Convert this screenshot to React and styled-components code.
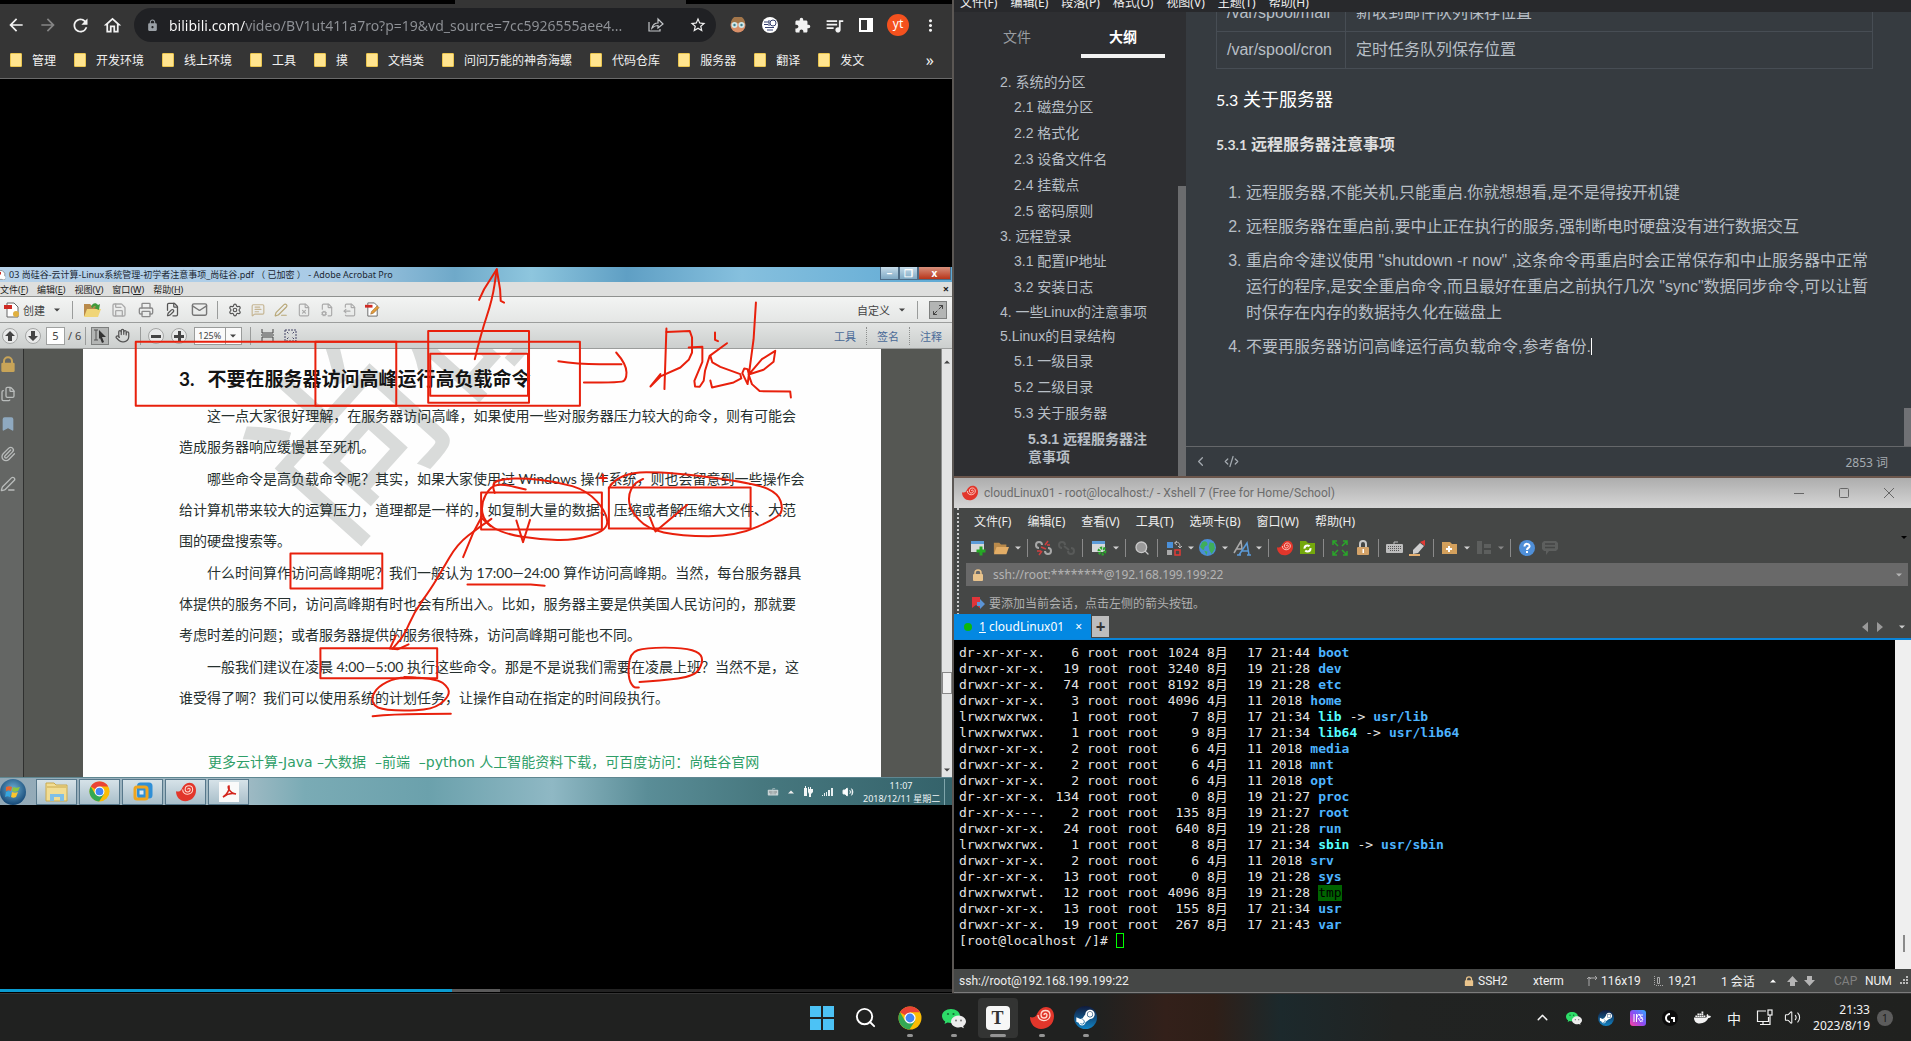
import React from "react";
import styled, { createGlobalStyle, css } from "styled-components";
import {
  MdArrowBack, MdArrowForward, MdRefresh, MdOutlineHome, MdLock, MdStarBorder,
  MdExtension, MdQueueMusic, MdMoreVert,
} from "react-icons/md";
import { FaSteamSymbol, FaDocker } from "react-icons/fa";
import {
  Search, Unlink, Maximize2, Hand, Settings, Printer, Save, Mail,
  FileX, FileCog, FileOutput, FileEdit, MessageSquareText, Paperclip, Bookmark, Files,
  PenLine, ChevronUp, ChevronLeft, CodeXml, Volume2,
} from "lucide-react";

const UI = `"Noto Sans", "Noto Sans CJK SC", sans-serif`;
const NARROW = `Roboto, "Noto Sans CJK SC", sans-serif`;
const ARIAL = `"Liberation Sans", "Noto Sans CJK SC", sans-serif`;

const Global = createGlobalStyle`
  *, *::before, *::after { box-sizing: border-box; }
  body { margin: 0; background: #000; font-family: ${UI}; }
  button, input, select { font: inherit; color: inherit; background: none; border: 0; padding: 0; margin: 0; }
  ul, ol { margin: 0; }
  svg { display: block; flex: none; }
`;

const Desktop = styled.div`
  display: grid;
  grid-template-rows: minmax(0, 1fr) 48px;
  height: 100vh;
  overflow: hidden;
`;
const Windows = styled.div`
  display: grid;
  grid-template-columns: minmax(0, 954fr) minmax(0, 957fr);
  min-height: 0;
`;

/* ---------- Browser ---------- */
const Browser = styled.section`
  display: flex;
  flex-direction: column;
  min-width: 0;
  border-right: 2px solid #5b5754;
`;
const TabStrip = styled.div`
  height: 4px;
  background: linear-gradient(90deg, #000 0 455px, #353535 455px 686px, #000 686px);
`;
const NavBar = styled.div`
  display: flex;
  align-items: center;
  height: 42px;
  background: #353535;
  padding-right: 6px;
`;
const NavButton = styled.button`
  display: grid;
  place-items: center;
  width: 32px;
  height: 32px;
  color: ${(p) => (p.$dim ? "#858585" : "#f2f2f2")};
`;
const UrlPill = styled.label`
  display: flex;
  align-items: center;
  flex: 1;
  min-width: 0;
  height: 34px;
  margin: 0 6px;
  padding: 0 2px 0 12px;
  gap: 10px;
  border-radius: 17px;
  background: #202124;
  color: #9aa0a6;
`;
const UrlInput = styled.input`
  flex: 1;
  min-width: 0;
  height: 22px;
  font-size: 14px;
  background: linear-gradient(90deg, #fff 0 76px, #8f9297 76px);
  background-clip: text;
  -webkit-background-clip: text;
  -webkit-text-fill-color: transparent;
`;
const Avatar = styled.span`
  width: 22px;
  height: 22px;
  border-radius: 50%;
  background: #f4511e;
  color: #fff;
  font-size: 12px;
  line-height: 20px;
  text-align: center;
`;
const BookmarkBar = styled.nav`
  display: flex;
  align-items: center;
  gap: 18px;
  height: 33px;
  padding: 0 18px 4px 10px;
  background: #353535;
  border-bottom: 1px solid #6a6a6a;
  color: #f1f1f1;
  font-size: 12px;
`;
const BookmarkItem = styled.button`
  display: flex;
  align-items: center;
  gap: 10px;
  white-space: nowrap;
`;
const Folder = styled.span`
  width: 12px;
  height: 14px;
  background: #ffe48f;
  border: 1px solid #eac54f;
  border-radius: 1px;
`;
const More = styled.button`
  margin-left: auto;
  font-size: 16px;
`;
const Video = styled.div`
  position: relative;
  flex: 1;
  min-height: 0;
  display: flex;
  flex-direction: column;
  justify-content: center;
  background: #000;
`;
const Progress = styled.div`
  position: absolute;
  inset: auto 0 1px 0;
  height: 3px;
  background: linear-gradient(90deg, #0a9bd0 0 47.5%, #5a5a5a 47.5% 52.5%, #222 52.5%);
`;

/* ---------- Acrobat in the video ---------- */
const Frame = styled.div`
  position: relative;
  overflow: hidden;
`;
const AcroTitle = styled.div`
  display: flex;
  align-items: center;
  height: 15px;
  gap: 3px;
  margin-left: -4px;
  background: linear-gradient(90deg, #b7d2ea 0, #a9cbe6 35%, #6fa9c9 48%, #8ec6de 56%, #5f9fc4 66%, #86c0de 78%, #5ea9d4 100%);
  color: #1b2733;
  font-size: 9px;
  line-height: 15px;
  white-space: nowrap;
`;
const WinButtons = styled.div`
  display: flex;
  align-self: flex-start;
  margin-left: auto;
  margin-right: 1px;
`;
const WinButton = styled.button`
  width: ${(p) => (p.$close ? 33 : 19)}px;
  height: 13px;
  border: 1px solid #4d6c86;
  border-top: 0;
  background: ${(p) => (p.$close ? "linear-gradient(#d8907c, #b8351a)" : "linear-gradient(#c6dcea, #7fa9c4)")};
  color: #fff;
  font-size: 10px;
  font-weight: 700;
  line-height: 11px;
`;
const AcroMenu = styled.div`
  display: flex;
  align-items: center;
  gap: 9px;
  height: 15px;
  background: #dedfde;
  border-bottom: 1px solid #8f918f;
  color: #222;
  font-size: 9px;
`;
const CloseDoc = styled.button`
  margin-left: auto;
  margin-right: 3px;
  font-size: 11px;
  font-weight: 700;
  line-height: 12px;
`;
const AcroBar = styled.div`
  display: flex;
  align-items: center;
  height: 26px;
  background: ${(p) => (p.$low ? "linear-gradient(#e2e4e3, #cccfce)" : "linear-gradient(#f3f4f3, #e4e6e5)")};
  border-bottom: 1px solid #9b9d9c;
  color: #444;
  font-size: 11px;
`;
const ToolIcon = styled.button`
  display: grid;
  place-items: center;
  width: ${(p) => (p.$wide ? 27 : 23)}px;
  height: 22px;
  color: ${(p) => p.$color || "#555"};
`;
const AcroSep = styled.span`
  width: 1px;
  height: 18px;
  margin: 0 ${(p) => (p.$wide ? 11 : 5)}px 0 4px;
  background: #9a9c9b;
`;
const AcroSpacer = styled.span`
  width: 5px;
`;
const Tri = styled.span`
  flex: none;
  border: ${(p) => p.$size || 3}px solid transparent;
  border-top-color: ${(p) => (p.$up ? "transparent" : p.$color || "#444")};
  border-bottom-color: ${(p) => (p.$up ? p.$color || "#444" : "transparent")};
  transform: translateY(${(p) => (p.$up ? -25 : 25)}%);
`;
const RoundTool = styled.button`
  width: 16px;
  height: 16px;
  margin: 0 5px 0 2px;
  border: 1px solid #a4a6a5;
  border-radius: 50%;
  background: #e9eaea;
  display: grid;
  place-items: center;
  color: #4c4c4c;
`;
const PageInput = styled.input`
  width: 19px;
  height: 18px;
  margin-right: 3px;
  border: 1px solid #a0a2a1;
  background: #fff;
  text-align: center;
`;
const Pressed = styled.button`
  display: grid;
  place-items: center;
  width: 18px;
  height: 18px;
  background: #b3b5b4;
  border: 1px solid #7d7f7e;
`;
const ZoomBox = styled.span`
  display: flex;
  align-items: center;
  width: 48px;
  height: 18px;
  margin: 0 4px 0 2px;
  padding-right: 5px;
  border: 1px solid #9a9c9b;
  background: #fafafa;
`;
const ZoomSelect = styled.select`
  appearance: none;
  flex: 1;
  height: 16px;
  padding-left: 3px;
  border-right: 1px solid #9a9c9b;
  margin-right: 4px;
  font-size: 9px;
`;
const Push = styled.span`
  margin-left: auto;
`;
const PanelLink = styled.button`
  width: 43px;
  height: 18px;
  border-left: 1px dotted ${(p) => (p.$first ? "transparent" : "#8d8f8e")};
  color: #4a6a97;
`;
const Viewer = styled.div`
  display: grid;
  grid-template-columns: 24px 59px minmax(0, 798fr) minmax(0, 60fr) 11px;
  background: #555753;
`;
const Rail = styled.div`
  display: flex;
  flex-direction: column;
  gap: 14px;
  padding: 7px 0 0;
  background: #646664;
  border-right: 1px solid #2f302f;
  color: #b9bcbb;
`;
const Gap = styled.div``;
const Page = styled.article`
  position: relative;
  overflow: hidden;
  padding: 15px 0 0 96px;
  background: #fefefe;
  color: #26302f;
  font-family: Lato, "Noto Sans CJK SC", sans-serif;
`;
const Watermark = styled.div`
  position: absolute;
  left: 168px;
  top: -6px;
  font-size: 186px;
  line-height: 186px;
  white-space: nowrap;
  color: #d9dbda;
  transform: rotate(-48deg);
  transform-origin: 93px 93px;
`;
const PageBody = styled.div`
  position: relative;
  width: 617px;
`;
const PageHeading = styled.h2`
  display: flex;
  gap: 13px;
  margin: 0 0 6px;
  color: #141414;
  font-size: 19px;
  font-weight: 700;
  line-height: 30px;
  white-space: nowrap;
`;
const Para = styled.p`
  margin: 0 0 1px;
  font-size: 14px;
  line-height: 31px;
  text-indent: 28px;
`;
const Line = styled.span`
  display: block;
  white-space: nowrap;
  text-align: justify;
  text-align-last: ${(p) => (p.$end ? "left" : "justify")};
  & + & { text-indent: 0; }
`;
const PageFoot = styled.p`
  margin: 39px 0 0 29px;
  height: 25px;
  font-family: "DejaVu Sans", "Noto Sans CJK SC", sans-serif;
  font-size: 14px;
  line-height: 20px;
  color: #2f9e68;
  white-space: nowrap;
`;
const ScrollCol = styled.div`
  display: flex;
  flex-direction: column;
  align-items: center;
  background: #e3e4e4;
  border-left: 1px solid #8c8e8d;
  padding: 10px 0 4px;
`;
const ScrollThumb = styled.span`
  width: 10px;
  height: 22px;
  margin: 307px 0 auto;
  border: 1px solid #888;
  background: #f0f0f0;
`;
const Win7Bar = styled.div`
  display: flex;
  align-items: center;
  height: 28px;
  background: linear-gradient(90deg, #91a8b6 0, #a4bcc6 25%, #7aabb5 32%, #6ba1ac 45%, #8fb8c4 58%, #5a8d97 68%, #47787f 80%, #34626a 100%);
  border-top: 1px solid #5f8791;
`;
const Orb = styled.button`
  width: 26px;
  height: 26px;
  margin-right: 10px;
  display: grid;
  place-items: center;
  border-radius: 50%;
  background: radial-gradient(circle at 50% 40%, #6fb1d5, #174a78 75%);
`;
const Tile = styled.button`
  display: grid;
  place-items: center;
  width: 41px;
  height: 26px;
  margin-right: 2px;
  border: 1px solid #56778a;
  background: linear-gradient(#d6e2e8, #a9bfca);
`;
const Win7Tray = styled.div`
  display: flex;
  align-items: center;
  gap: 9px;
  margin-left: auto;
  color: #eef4f5;
`;
const Win7Clock = styled.div`
  width: 76px;
  font-size: 9px;
  line-height: 13px;
  text-align: center;
  white-space: nowrap;
`;
const ShowDesktop = styled.button`
  width: 8px;
  height: 26px;
  margin-left: -4px;
  border-left: 1px solid #7fa5ab;
`;
const Ink = styled.svg`
  position: absolute;
  inset: 0;
  width: 100%;
  height: 100%;
  fill: none;
  stroke: #e8200c;
  stroke-width: 6;
  stroke-linecap: round;
  stroke-linejoin: round;
`;

/* ---------- Right column ---------- */
const RightCol = styled.div`
  display: flex;
  flex-direction: column;
  min-width: 0;
  min-height: 0;
`;
const Typora = styled.section`
  display: flex;
  flex-direction: column;
  background: #363b40;
  border-bottom: 2px solid #6b564c;
`;
const TyMenu = styled.div`
  display: flex;
  align-items: flex-end;
  gap: 13px;
  height: 12px;
  padding-left: 6px;
  overflow: hidden;
  background: #28292c;
  color: #eee;
  font-size: 12px;
  line-height: 18px;
`;
const TyBody = styled.div`
  display: grid;
  grid-template-columns: 232px minmax(0, 1fr);
`;
const Side = styled.aside`
  display: grid;
  grid-template-columns: minmax(0, 1fr) 8px;
  background: #2e2f32;
`;
const SideMain = styled.div`
  padding-bottom: 6px;
`;
const SideScroll = styled.span`
  margin-top: 174px;
  background: #6b6c6e;
`;
const SideTabs = styled.div`
  display: grid;
  grid-template-columns: 84px 84px;
  gap: 22px;
  padding: 5px 0 12px 21px;
`;
const SideTab = styled.button`
  height: 41px;
  font-size: 14px;
  color: ${(p) => (p.$on ? "#fff" : "#9a9da1")};
  font-weight: ${(p) => (p.$on ? 700 : 400)};
  border-bottom: 4px solid ${(p) => (p.$on ? "#f2f2f2" : "transparent")};
`;
const Outline = styled.ul`
  list-style: none;
  padding: 0 18px 0 ${(p) => (p.$root ? 46 : 14)}px;
  ${(p) => !p.$root && css`padding-right: 0;`}
`;
const OutlineLink = styled.a`
  display: block;
  padding: 4px 0;
  font-family: ${ARIAL};
  font-size: 14px;
  line-height: ${(p) => (p.$top ? 16 : 18)}px;
  font-weight: ${(p) => (p.$on ? 700 : 400)};
  color: #b8bfc6;
  text-decoration: none;
`;
const Editor = styled.div`
  display: flex;
  flex-direction: column;
  min-width: 0;
`;
const Doc = styled.div`
  position: relative;
  flex: 1;
  overflow: hidden;
  padding: 0 38px 0 30px;
  font-family: ${ARIAL};
  font-size: 16px;
  line-height: 26px;
  color: #b8bfc6;
`;
const DocTable = styled.table`
  width: 100%;
  margin-top: -18px;
  border-collapse: collapse;
`;
const Td = styled.td`
  width: ${(p) => (p.$key ? "129px" : "auto")};
  height: 37px;
  padding: 0 10px;
  border: 1px solid #474d54;
  white-space: nowrap;
`;
const H3 = styled.h3`
  margin: 17px 0 0;
  font: 400 18px/26px Lato, "Noto Sans CJK SC", sans-serif;
  color: #fff;
`;
const H4 = styled.h4`
  margin: 18px 0 22px;
  font: 700 16px/26px Lato, "Noto Sans CJK SC", sans-serif;
  color: #dedede;
`;
const HeadNo = styled.span`
  font-size: ${(p) => (p.$small ? 14 : 16)}px;
`;
const Notes = styled.ol`
  padding-left: 30px;
`;
const Note = styled.li`
  margin-bottom: 8px;
`;
const Caret = styled.span`
  display: inline-block;
  width: 1px;
  height: 17px;
  vertical-align: -3px;
  background: #fff;
`;
const DocThumb = styled.span`
  position: absolute;
  right: 0;
  bottom: 0;
  width: 7px;
  height: 38px;
  background: #707175;
`;
const TyFoot = styled.div`
  display: flex;
  align-items: center;
  gap: 16px;
  height: 30px;
  padding: 0 23px 0 7px;
  border-top: 1px solid #65676a;
  color: #a5abb1;
  font-size: 12px;
`;

/* ---------- Xshell ---------- */
const Xshell = styled.section`
  flex: 1;
  min-height: 0;
  display: flex;
  flex-direction: column;
  background: #454746;
  color: #eee;
  font-size: 12px;
  border-bottom: 1px solid #7c7c7c;
`;
const XTitle = styled.div`
  display: flex;
  align-items: center;
  gap: 6px;
  height: 30px;
  padding: 0 17px 0 8px;
  background: linear-gradient(#adadad, #d6d6d6);
  color: #6c6c6c;
  font-family: ${NARROW};
`;
const XWin = styled.div`
  display: flex;
  align-items: center;
  gap: 35px;
  margin-left: auto;
`;
const XHead = styled.div`
  border-left: 2px dotted #c8c8c8;
  margin-left: 3px;
`;
const XMenu = styled.div`
  display: flex;
  align-items: center;
  gap: 16px;
  height: 26px;
  padding-left: 15px;
`;
const XTools = styled.div`
  display: flex;
  align-items: center;
  height: 29px;
  padding: 0 4px 2px 7px;
`;
const XTool = styled.button`
  display: grid;
  place-items: center;
  width: 23px;
  height: 22px;
  color: ${(p) => p.$color || "#aaa"};
`;
const XCaret = styled.button`
  display: grid;
  place-items: center;
  width: 11px;
  height: 22px;
`;
const XSep = styled.span`
  width: 1px;
  height: 18px;
  margin: 0 4px 0 4px;
  background: #8a8a8a;
`;
const Address = styled.label`
  display: flex;
  align-items: center;
  gap: 9px;
  height: 23px;
  margin: 0 3px 0 7px;
  padding: 0 6px;
  background: #696969;
  color: #b4b4b4;
`;
const AddressInput = styled.input`
  flex: 1;
  font-size: 12px;
  color: #b4b4b4;
`;
const Hint = styled.div`
  display: flex;
  align-items: center;
  gap: 4px;
  height: 29px;
  padding: 4px 0 0 13px;
  color: #b0b0b0;
`;
const XTabs = styled.div`
  display: flex;
  align-items: center;
  height: 25px;
  border-bottom: 2px solid #0a84d8;
`;
const XTab = styled.button`
  display: flex;
  align-items: center;
  width: 137px;
  height: 25px;
  padding: 0 9px 0 10px;
  gap: 7px;
  background: #0388e2;
  color: #fff;
  white-space: nowrap;
`;
const Dot = styled.span`
  width: 8px;
  height: 8px;
  border-radius: 50%;
  background: #0db80d;
`;
const AddTab = styled.button`
  width: 17px;
  height: 21px;
  margin-left: 1px;
  background: #bdbdbd;
  color: #333;
  font-size: 17px;
  font-weight: 700;
  line-height: 17px;
`;
const TabNav = styled.div`
  display: flex;
  align-items: center;
  gap: 16px;
  margin: 0 6px 0 auto;
`;
const Console = styled.div`
  flex: 1;
  min-height: 0;
  display: grid;
  grid-template-columns: minmax(0, 1fr) 16px;
  background: #000;
`;
const Term = styled.div`
  padding: 5px;
  font-family: "DejaVu Sans Mono", "Noto Sans CJK SC", monospace;
  font-size: 13px;
  line-height: 16px;
  color: #e4e4e4;
`;
const TermRow = styled.div`
  display: grid;
  grid-template-columns: 88px 24px 32px 32px 32px 32px 16px 1fr;
  column-gap: 8px;
  height: 16px;
  white-space: pre;
`;
const Num = styled.span`
  text-align: right;
`;
const Tail = styled.span`
  display: flex;
  gap: 8px;
`;
const Name = styled.span`
  color: ${(p) => (p.$kind === "link" ? "#55ffff" : p.$kind === "tmp" ? "#000" : "#4db4ff")};
  font-weight: ${(p) => (p.$kind === "tmp" ? 400 : 700)};
  background: ${(p) => (p.$kind === "tmp" ? "#006400" : "none")};
`;
const Block = styled.span`
  display: inline-block;
  width: 8px;
  height: 15px;
  border: 1px solid #0f0;
  vertical-align: -3px;
`;
const TermScroll = styled.div`
  display: flex;
  justify-content: flex-end;
  align-items: flex-end;
  padding: 0 6px 17px;
  background: #efefef;
`;
const TermThumb = styled.span`
  width: 2px;
  height: 17px;
  background: #8a8a8a;
`;
const Status = styled.div`
  display: flex;
  align-items: center;
  height: 23px;
  padding: 0 2px 0 5px;
  font-family: ${NARROW};
`;
const StatusItem = styled.span`
  display: flex;
  align-items: center;
  gap: 4px;
  width: ${(p) => p.$w}px;
  color: ${(p) => (p.$dim ? "#808080" : "#f0f0f0")};
  white-space: nowrap;
`;

/* ---------- Host taskbar ---------- */
const Taskbar = styled.footer`
  display: grid;
  grid-template-columns: 1fr auto 1fr;
  align-items: center;
  background: linear-gradient(90deg, #202120 0 57.5%, #33201a 61%, #2f1f18 63.5%, #1c292c 67%, #212322 73%, #20211f 100%);
  border-top: 1px solid #343434;
`;
const Dock = styled.div`
  grid-column: 2;
  display: flex;
  gap: 4px;
  margin-right: 4px;
`;
const DockItem = styled.button`
  position: relative;
  display: grid;
  place-items: center;
  width: 40px;
  height: 40px;
  border-radius: 4px;
  background: ${(p) => (p.$active ? "#333433" : "none")};
  color: #fff;
  &::after {
    content: "";
    display: ${(p) => (p.$run ? "block" : "none")};
    position: absolute;
    bottom: 1px;
    width: ${(p) => (p.$active ? 16 : 6)}px;
    height: 3px;
    border-radius: 2px;
    background: #949494;
  }
`;
const TyIcon = styled.span`
  width: 24px;
  height: 24px;
  border-radius: 4px;
  background: #f7f7f7;
  color: #333;
  font: 700 18px/24px "Liberation Serif", serif;
`;
const Tray = styled.div`
  display: flex;
  justify-content: flex-end;
  align-items: center;
  padding-right: 18px;
  color: #f3f3f3;
`;
const TrayItem = styled.button`
  display: grid;
  place-items: center;
  width: ${(p) => (p.$tight ? 28 : 32)}px;
  height: 32px;
  font-size: 14px;
`;
const Clock = styled.div`
  width: 64px;
  font-size: 12px;
  line-height: 16px;
  text-align: right;
`;
const Badge = styled.span`
  width: 16px;
  height: 16px;
  margin-left: 7px;
  border-radius: 50%;
  background: #5c5c5c;
  color: #1d1d1d;
  font-size: 11px;
  line-height: 16px;
  text-align: center;
`;

/* ---------- Drawings ---------- */
const Snail = ({ size = 18 }) => (
  <svg width={size} height={size} viewBox="0 0 24 24">
    <path d="M0 11c3 1 6 0 7-3 2-4 5-7 9-7 5 0 8 4 8 9 0 8-6 13-13 13C5 23 0 18 0 11z" fill="#e2362b" />
    <path d="M8 9c0 8 12 7 12 0 0-6-9-6-9 0 0 4 6 4 6 0 0-2-3-2-3 0" fill="none" stroke="#ffd9cf" strokeWidth="1.300" />
  </svg>
);
const Chrome = ({ size = 24 }) => (
  <svg width={size} height={size} viewBox="0 0 24 24">
    <circle cx="12" cy="12" r="11.5" fill="#fbbc04" />
    <path d="M12 12 2 6.300A11.500 11.500 0 0 1 22 6.300H12z" fill="#ea4335" />
    <path d="M2 6.300A11.500 11.500 0 0 0 11.500 23.500L17 15 12 12 7 14.800z" fill="#34a853" />
    <circle cx="12" cy="12" r="5.600" fill="#fff" />
    <circle cx="12" cy="12" r="4.400" fill="#4285f4" />
  </svg>
);
const WeChat = ({ size = 24 }) => (
  <svg width={size} height={size} viewBox="0 0 24 24">
    <path d="M9 3c-5 0-9 3-9 7 0 2.200 1.200 4.200 3.200 5.500L2.500 18l3-1.500c1 .3 2 .5 3.500.5 5 0 9-3 9-7s-4-7-9-7z" fill="#2ddc68" />
    <circle cx="6" cy="8" r="1.100" fill="#146b34" /><circle cx="11.500" cy="8" r="1.100" fill="#146b34" />
    <path d="M16.500 9.500c-4 0-7.500 2.600-7.500 6s3.500 6 7.500 6c1 0 2-.2 2.800-.5l2.500 1.300-.6-2.200c1.700-1.100 2.800-2.800 2.800-4.600 0-3.400-3.500-6-7.500-6z" fill="#ececec" />
    <circle cx="14" cy="14.500" r="1" fill="#777" /><circle cx="19" cy="14.500" r="1" fill="#777" />
  </svg>
);
const SteamDisc = styled.span`
  display: grid;
  place-items: center;
  width: ${(p) => p.$s}px;
  height: ${(p) => p.$s}px;
  border-radius: 50%;
  background: linear-gradient(#101a3c, #1283c4);
  color: #fff;
`;
const WinLogo = () => (
  <svg width="24" height="24" viewBox="0 0 24 24" fill="#4cc2f5">
    <path d="M0 0h11v11H0zM13 0h11v11H13zM0 13h11v11H0zM13 13h11v11H13z" />
  </svg>
);
const Padlock = ({ size = 12, color = "#eac48c" }) => (
  <svg width={size} height={size} viewBox="0 0 12 12">
    <path d="M3 6V4a3 3 0 0 1 6 0v2" fill="none" stroke={color} strokeWidth="1.500" />
    <rect x="1" y="5" width="10" height="7" rx="1" fill={color} />
  </svg>
);
const GreyPadlock = () => (
  <svg width="14" height="15" viewBox="0 0 14 15">
    <path d="M4 8V4a3 3 0 0 1 6 0v4" fill="none" stroke="#c9c9c9" strokeWidth="2" />
    <rect x="1" y="7" width="12" height="8" rx="1" fill="#d3a268" /><path d="M6.500 9h1.500v4H6.500z" fill="#fff" />
  </svg>
);
const PdfIcon = ({ size = 16, extra = "#e0b040" }) => (
  <svg width={size} height={size} viewBox="0 0 16 16">
    <path d="M3 1h7l4 4v10H3z" fill="#fff" stroke="#666" />
    <path d="M0 3h8v4H0z" fill="#cf2b24" />
    <circle cx="12" cy="12" r="3" fill={extra} />
  </svg>
);
const PdfPen = () => (
  <svg width="15" height="15" viewBox="0 0 16 16">
    <path d="M3 1h7l3 3v11H3z" fill="#fff" stroke="#666" />
    <path d="M0 3h8v3H0z" fill="#cf2b24" />
    <path d="m6 13 1-3 6-6 2 2-6 6z" fill="#e09a3a" stroke="#8a5a20" strokeWidth=".5" />
  </svg>
);
const OpenFolder = ({ size = 18, arrow }) => (
  <svg width={size} height={size} viewBox="0 0 18 18">
    <path d="M1 3h6l2 2h6v10H1z" fill="#b98a4b" />
    <path d="M4 8h14l-3 8H1z" fill={arrow ? "#f0d577" : "#e2ad66"} />
    {arrow && <path d="M8 6c1-4 5-5 7-2l2-1-1 6-5-2 2-1c-1-2-3-1-3 1z" fill="#3f9b3a" />}
  </svg>
);
const NewWin = ({ gear }) => (
  <svg width="16" height="16" viewBox="0 0 16 16">
    <path d="M1 1h13v11H1z" fill="#d6d8da" />
    <path d="M1 1h13v3H1z" fill="#5b9bd8" />
    {gear ? <circle cx="11" cy="11" r="3" fill="none" stroke="#2ba52b" strokeWidth="3" strokeDasharray="2 1" />
      : <path d="M9.500 9.500v-3h3v3h3v3h-3v3h-3v-3h-3v-3z" fill="#25a825" />}
  </svg>
);
const ChainIcon = ({ dim }) => (
  <svg width="17" height="16" viewBox="0 0 17 16" fill="none" strokeWidth="2">
    <g stroke={dim ? "#585a59" : "#a8a8a8"}>
      <path d="M7 5a3 3 0 1 0-3 3M10 11a3 3 0 1 0 3-3" />
      {dim && <path d="m6 6 5 4" />}
    </g>
    {!dim && <path d="m6 7 5 2M13 1l-3 4M15 5h-3M2 11h4M4 15l3-4" stroke="#cf3f3f" strokeWidth="1.500" />}
  </svg>
);
const LayoutIcon = () => (
  <svg width="16" height="16" viewBox="0 0 16 16">
    <path d="M1 2h6v6H1z" fill="#4a90d9" /><path d="M1 10h5v5H1z" fill="#aaa" />
    <path d="M9 10h5v5H9z" fill="none" stroke="#e23b36" strokeWidth="1.500" />
    <path d="M9 3c4-2 5 1 5 4m-2-1 2 2 2-2M11 1 8.500 3 11 5" fill="none" stroke="#bbb" />
  </svg>
);
const EarthIcon = () => (
  <svg width="17" height="17" viewBox="0 0 16 16">
    <circle cx="8" cy="8" r="8" fill="#4a8fd6" />
    <path d="M3 3c3-2 5 0 5 2S5 6 5 9s-3 0-4-2zM10 3l4 1 1 5-3 5-2-3-1-4zM5 11l3 1-1 3z" fill="#3fae5a" />
  </svg>
);
const FontIcon = () => (
  <svg width="18" height="16" viewBox="0 0 18 16" fill="none">
    <path d="M1 13 8 1l1 8M4 9h5" stroke="#aaa" strokeWidth="1.500" />
    <path d="m6 15 8-12 2 12M9 11h6M4 15h4M14 15h4" stroke="#5b9bd8" strokeWidth="1.500" />
  </svg>
);
const GreenFolder = () => (
  <svg width="17" height="15" viewBox="0 0 17 15">
    <path d="M1 1h6l2 2h7v11H1z" fill="#74a80c" />
    <circle cx="8.500" cy="8.500" r="3" fill="none" stroke="#fff" strokeWidth="2" strokeDasharray="7 2" />
  </svg>
);
const ExpandIcon = () => (
  <svg width="16" height="16" viewBox="0 0 16 16" fill="none" stroke="#2aa52a" strokeWidth="1.500">
    <path d="M1 5V1h4M11 1h4v4M15 11v4h-4M5 15H1v-4M1 1l5 5M15 1l-5 5M15 15l-5-5M1 15l5-5" />
  </svg>
);
const PlusFolder = () => (
  <svg width="15" height="14" viewBox="0 0 15 14">
    <path d="M0 1h8l2 2h5v10H0z" fill="#d3a05c" /><path d="M6 5h2v2h2v2H8v2H6V9H4V7h2z" fill="#fff" />
  </svg>
);
const KeysIcon = ({ color = "#bdbdbd", size = 17 }) => (
  <svg width={size} height={size - 4} viewBox="0 0 17 13">
    <rect x="0" y="3" width="17" height="9" rx="1" fill={color} />
    <path d="M2 5.500h13M2 7.500h13M4 9.500h9" stroke="#555" strokeDasharray="1 1" />
    <path d="M8 3V1h4" fill="none" stroke={color} />
  </svg>
);
const PenIcon = () => (
  <svg width="17" height="16" viewBox="0 0 17 16">
    <path d="m4 10 7-7 4 3-6 7-5 1z" fill="#cfcfcf" /><path d="m11 2 5-2v6z" fill="#e23b36" />
    <path d="M0 14h11v2H0z" fill="#e5b071" />
  </svg>
);
const ChatIcon = () => (
  <svg width="16" height="16" viewBox="0 0 16 16">
    <path d="M2 1h12l2 2v6l-2 2H7l-3 4v-4H2L0 9V3z" fill="#5d5f5e" /><path d="M3 4h10M3 7.500h10" stroke="#444645" strokeWidth="1.500" />
  </svg>
);
const FlagIcon = () => (
  <svg width="13" height="12" viewBox="0 0 13 12">
    <path d="M0 0h8v11L4 8l-4 3z" fill="#e0353a" /><path d="M5 5h3V2l5 5-5 5V9H5z" fill="#5b94d6" />
  </svg>
);
const CheekyFace = () => (
  <svg width="16" height="16" viewBox="0 0 16 16">
    <circle cx="8" cy="8" r="7.500" fill="#d98f68" /><path d="M1 6a7 7 0 0 1 14 0z" fill="#a3764a" />
    <circle cx="4.500" cy="8" r="3" fill="#cfe6e8" /><circle cx="11.500" cy="8" r="3" fill="#cfe6e8" />
    <circle cx="4.500" cy="8" r="1.200" fill="#3d7f8c" /><circle cx="11.500" cy="8" r="1.200" fill="#3d7f8c" />
  </svg>
);
const SpiralFace = () => (
  <svg width="16" height="16" viewBox="0 0 16 16">
    <circle cx="8" cy="8" r="8" fill="#fff" />
    <path d="M2 5h5M2 7.500h4M3 10.500h9M5 13h6M7 3v6" stroke="#34406f" fill="none" />
    <circle cx="11" cy="6" r="3" stroke="#34406f" fill="none" />
  </svg>
);
const SidePanel = () => (
  <svg width="14" height="14" viewBox="0 0 14 14"><path d="M0 0h14v14H0zM2 2v10h6V2z" fill="#fff" fillRule="evenodd" /></svg>
);
const ShareArrow = () => (
  <svg width="16" height="16" viewBox="0 0 16 16" fill="none" stroke="#c4c7ca" strokeWidth="1.200">
    <path d="M1 5v9h11v-2M4 11c1-4 3-5 6-5V2l5 5-5 4V8.500c-3 0-4 .5-6 2.500z" />
  </svg>
);
const Flag7 = () => (
  <svg width="16" height="16" viewBox="0 0 16 16">
    <path d="M1 3c2-1 4-1 6 0L6 7c-2-1-3-1-5 0z" fill="#e8652e" /><path d="M8 3c2 1 4 1 7 0l-2 4c-2 1-4 1-6 0z" fill="#8cc63e" />
    <path d="M1 8c2-1 3-1 5 0l-1 5c-2-1-3-1-5 0z" fill="#35a6df" /><path d="M7 8c2 1 4 1 6 0l-2 5c-2 1-3 1-5 0z" fill="#fbc52c" />
  </svg>
);
const Explorer = () => (
  <svg width="24" height="22" viewBox="0 0 24 22">
    <path d="M1 2h8l2 2h11v16H1z" fill="#f1dd94" stroke="#c9a94e" /><path d="M5 20v-7h14v7h-4v-4H9v4z" fill="#7fbfe6" />
    <path d="M2 6h19" stroke="#c9a94e" />
  </svg>
);
const VmIcon = () => (
  <svg width="20" height="20" viewBox="0 0 20 20" fill="none" strokeWidth="3">
    <rect x="5.500" y="2" width="12.500" height="13" rx="2" fill="#2f8fd6" stroke="#2f8fd6" />
    <rect x="2" y="5" width="12" height="12" rx="2" stroke="#f0a51e" />
    <rect x="6.500" y="8.500" width="4" height="4" fill="#dbe9f3" />
  </svg>
);
const AcroIcon = () => (
  <svg width="20" height="20" viewBox="0 0 20 20">
    <path d="M0 0h20v20H0z" fill="#fafafa" />
    <path d="M4 15c4-2 7-8 6-11-2 0 0 7 7 8-4-1-9 0-13 3z" fill="none" stroke="#d3241c" strokeWidth="1.600" />
  </svg>
);
const Bars = () => (
  <svg width="11" height="9" viewBox="0 0 11 9" fill="#e8f0f1"><path d="M0 8h1v1H0zM2 6h1v3H2zM4 5h1v4H4zM6 3h2v6H6zM9 1h2v8H9z" /></svg>
);
const Plug = () => (
  <svg width="10" height="11" viewBox="0 0 10 11" fill="#f3f6f6"><path d="M1 2h3v8H1zM5 1h1v2h1V1h1v2h2v3L8 8v3H6V8L5 6zM2 0h1v2H2z" /></svg>
);
const NetIcon = () => (
  <svg width="17" height="17" viewBox="0 0 17 17" fill="none" stroke="#f3f3f3" strokeWidth="1.200">
    <path d="M10 2H1.500v10.500h11V8M4 15.500h8M7 12.500v3" /><rect x="12" y="1" width="4" height="5" /><path d="M14 6v9.500h-2" />
  </svg>
);
const GIcon = () => (
  <svg width="16" height="16" viewBox="0 0 16 16">
    <circle cx="8" cy="8" r="8" fill="#0c0c0c" />
    <path d="M8 4a4 4 0 0 0 0 8M9 8h3v4" fill="none" stroke="#fff" strokeWidth="2" />
  </svg>
);
const PurpleApp = () => (
  <svg width="16" height="16" viewBox="0 0 16 16">
    <defs>
      <linearGradient id="app" x1="0" y1="1" x2="1" y2="0">
        <stop offset="0" stopColor="#ff3fa0" /><stop offset=".5" stopColor="#8a4df5" /><stop offset="1" stopColor="#2fa8ff" />
      </linearGradient>
    </defs>
    <rect width="16" height="16" rx="3" fill="url(#app)" />
    <path d="M4 4v8M6.500 4v8M6.500 8l2-4M8 8l3 4M9 5h4M9.500 8H13M11 11h2M9 4l4 6" stroke="#fff" fill="none" />
  </svg>
);
const TwoArrows = () => (
  <svg width="28" height="10" viewBox="0 0 28 10" fill="#b4b4b4">
    <path d="m5.500 0 5.500 6H8v4H3V6H0zM22.500 10 17 4h3V0h5v4h3z" />
  </svg>
);
const SizeIcon = () => (
  <svg width="10" height="10" viewBox="0 0 10 10" fill="none" stroke="#aaa"><path d="M2 10V2h8M0 3l2-2 2 2M8 0l2 2-2 2" /></svg>
);
const PosIcon = () => (
  <svg width="10" height="10" viewBox="0 0 10 10" fill="none" stroke="#aaa"><path d="M.5 0v10M2 9.500h8" strokeDasharray="1 1" /><path d="M3.500 1.500h2v6h-2z" /></svg>
);
const Grip = () => (
  <svg width="9" height="9" viewBox="0 0 9 9" fill="#bbb"><path d="M6 0h2v2H6zM3 3h2v2H3zM6 3h2v2H6zM0 6h2v2H0zM3 6h2v2H3zM6 6h2v2H6z" /></svg>
);

/* Hand-drawn marks: a list of points becomes a curve through the midpoints. */
const curve = (pts) => {
  let d = `M${pts[0]}`;
  for (let i = 1; i < pts.length - 1; i++) {
    const [x, y] = pts[i];
    const [nx, ny] = pts[i + 1];
    d += `Q${x} ${y} ${(x + nx) / 2} ${(y + ny) / 2}`;
  }
  return `${d}L${pts[pts.length - 1]}`;
};
const upperRight = [
  [[2, 310], [20, 235], [55, 130], [68, 40]],
  [[427, 290], [458, 325], [458, 375], [430, 380], [330, 380]],
  [[253, 316], [310, 325], [443, 325]],
  [[62, 712], [50, 682], [90, 670], [150, 668], [250, 678], [340, 705], [398, 770], [402, 825], [300, 855], [200, 852], [90, 835], [30, 800], [20, 745], [50, 690], [90, 686], [155, 702]],
  [[405, 697], [435, 650], [600, 650], [850, 685], [915, 715], [928, 760], [915, 785], [790, 842], [620, 842], [520, 820], [470, 765], [463, 720], [480, 685], [508, 670]],
  [[52, 790], [15, 815], [-50, 865], [-100, 950], [-130, 1000], [-180, 1070], [-210, 1140], [-245, 1180]],
];
const upperRightLines = [
  "15,132 30,100 68,40 78,100 80,135 90,140", "578,218 572,400", "127,795 147,860 168,793", "528,785 545,828 640,748",
  "376,667 398,667", "387,657 387,677", "25,780 -2,830 -33,905", "20,785 50,812",
  "578,228 648,225 655,245 655,290 645,312 620,335 560,362 530,392 560,355",
  "645,275 686,273 686,318 662,375 664,392 678,393 690,375 694,345 708,300 760,262",
  "724,230 724,252 733,256",
  "710,300 716,320 740,333 800,355 803,368 780,380 715,395 710,374",
  "847,140 840,250 822,385 806,352 812,338 822,340 826,356 865,310 905,285 900,318 870,342 825,356 835,385 858,406 950,407 952,425",
];
const lowerLeft = [
  [[1215, 350], [1310, 352], [1352, 385], [1345, 415], [1300, 448], [1200, 452], [1130, 445], [1115, 415], [1135, 380], [1190, 352], [1250, 352]],
  [[1120, 468], [1180, 462], [1355, 461]],
];
const lowerRight = [
  [[497, 365], [560, 362], [665, 348], [688, 305], [680, 278], [630, 262], [515, 262], [468, 278], [462, 350], [478, 382], [495, 382]],
];
const Annotations = () => (
  <Ink viewBox="0 266 952 539" preserveAspectRatio="xMinYMin meet">
    <g strokeWidth="2">
      <rect x="136" y="341" width="445" height="64" />
      <rect x="316" y="341" width="81" height="64" />
      <rect x="429" y="330" width="101" height="72" />
      <rect x="431" y="353" width="98" height="42" />
      <rect x="482" y="492" width="121" height="37" />
      <rect x="610" y="487" width="142" height="41" />
      <rect x="291" y="553" width="92" height="35" />
      <rect x="321" y="648" width="117" height="30" />
    </g>
    <g transform="translate(475 255) scale(.33333)">
      {upperRight.map((p, i) => <path key={i} d={curve(p)} />)}
      {upperRightLines.map((p) => <polyline key={p} points={p} />)}
    </g>
    <g transform="translate(0 560) scale(.33333)">
      {lowerLeft.map((p, i) => <path key={i} d={curve(p)} />)}
      <polyline points="1190,225 1172,265 1195,267 1228,252" />
      <polyline points="1405,72 1595,72 1637,76" />
    </g>
    <g transform="translate(475 560) scale(.33333)">
      {lowerRight.map((p, i) => <path key={i} d={curve(p)} />)}
    </g>
  </Ink>
);

const bookmarks = ["管理", "开发环境", "线上环境", "工具", "摸", "文档类", "问问万能的神奇海螺", "代码仓库", "服务器", "翻译", "发文"];
const paragraphs = [
  ["这一点大家很好理解，在服务器访问高峰，如果使用一些对服务器压力较大的命令，则有可能会", "造成服务器响应缓慢甚至死机。"],
  ["哪些命令是高负载命令呢？其实，如果大家使用过 Windows 操作系统，则也会留意到一些操作会", "给计算机带来较大的运算压力，道理都是一样的，如复制大量的数据、压缩或者解压缩大文件、大范", "围的硬盘搜索等。"],
  ["什么时间算作访问高峰期呢？我们一般认为 17:00—24:00 算作访问高峰期。当然，每台服务器具", "体提供的服务不同，访问高峰期有时也会有所出入。比如，服务器主要是供美国人民访问的，那就要", "考虑时差的问题；或者服务器提供的服务很特殊，访问高峰期可能也不同。"],
  ["一般我们建议在凌晨 4:00—5:00 执行这些命令。那是不是说我们需要在凌晨上班？当然不是，这", "谁受得了啊？我们可以使用系统的计划任务，让操作自动在指定的时间段执行。"],
];
const outline = [
  ["2. 系统的分区", ["2.1 磁盘分区", "2.2 格式化", "2.3 设备文件名", "2.4 挂载点", "2.5 密码原则"]],
  ["3. 远程登录", ["3.1 配置IP地址", "3.2 安装日志"]],
  ["4. 一些Linux的注意事项", []],
  ["5.Linux的目录结构", ["5.1 一级目录", "5.2 二级目录", "5.3 关于服务器"]],
];
const listing = [
  ["dr-xr-xr-x.", 6, 1024, "8月", 17, "21:44", "boot"],
  ["drwxr-xr-x.", 19, 3240, "8月", 19, "21:28", "dev"],
  ["drwxr-xr-x.", 74, 8192, "8月", 19, "21:28", "etc"],
  ["drwxr-xr-x.", 3, 4096, "4月", 11, "2018", "home"],
  ["lrwxrwxrwx.", 1, 7, "8月", 17, "21:34", "lib", "usr/lib"],
  ["lrwxrwxrwx.", 1, 9, "8月", 17, "21:34", "lib64", "usr/lib64"],
  ["drwxr-xr-x.", 2, 6, "4月", 11, "2018", "media"],
  ["drwxr-xr-x.", 2, 6, "4月", 11, "2018", "mnt"],
  ["drwxr-xr-x.", 2, 6, "4月", 11, "2018", "opt"],
  ["dr-xr-xr-x.", 134, 0, "8月", 19, "21:27", "proc"],
  ["dr-xr-x---.", 2, 135, "8月", 19, "21:27", "root"],
  ["drwxr-xr-x.", 24, 640, "8月", 19, "21:28", "run"],
  ["lrwxrwxrwx.", 1, 8, "8月", 17, "21:34", "sbin", "usr/sbin"],
  ["drwxr-xr-x.", 2, 6, "4月", 11, "2018", "srv"],
  ["dr-xr-xr-x.", 13, 0, "8月", 19, "21:28", "sys"],
  ["drwxrwxrwt.", 12, 4096, "8月", 19, "21:28", "tmp"],
  ["drwxr-xr-x.", 13, 155, "8月", 17, "21:34", "usr"],
  ["drwxr-xr-x.", 19, 267, "8月", 17, "21:43", "var"],
];

const AcrobatFrame = () => (
  <Frame>
    <AcroTitle>
      <PdfIcon size={10} extra="#fff" />
      <span>03 尚硅谷-云计算-Linux系统管理-初学者注意事项_尚硅谷.pdf （ 已加密 ） - Adobe Acrobat Pro</span>
      <WinButtons>
        <WinButton aria-label="最小化">‒</WinButton>
        <WinButton aria-label="还原">❐</WinButton>
        <WinButton $close aria-label="关闭">x</WinButton>
      </WinButtons>
    </AcroTitle>
    <AcroMenu>
      {[["文件", "F"], ["编辑", "E"], ["视图", "V"], ["窗口", "W"], ["帮助", "H"]].map(([t, k]) => (
        <span key={k}>{t}(<u>{k}</u>)</span>
      ))}
      <CloseDoc aria-label="关闭文档">×</CloseDoc>
    </AcroMenu>
    <AcroBar>
      <ToolIcon><PdfIcon /></ToolIcon>
      <span>创建</span>
      <ToolIcon $color="#444"><Tri /></ToolIcon>
      <AcroSep />
      <ToolIcon $wide><OpenFolder arrow /></ToolIcon>
      <ToolIcon $wide $color="#aaa"><Save size={16} /></ToolIcon>
      <ToolIcon $wide $color="#8b8b8b"><Printer size={16} /></ToolIcon>
      <ToolIcon $wide><FileEdit size={15} /></ToolIcon>
      <ToolIcon $wide $color="#777"><Mail size={17} /></ToolIcon>
      <AcroSep />
      <ToolIcon><Settings size={14} /></ToolIcon>
      <ToolIcon $color="#c5b592"><MessageSquareText size={14} /></ToolIcon>
      <ToolIcon $color="#b8a878"><PenLine size={14} /></ToolIcon>
      <ToolIcon $color="#aaa"><FileX size={14} /></ToolIcon>
      <ToolIcon $color="#aaa"><FileCog size={14} /></ToolIcon>
      <ToolIcon $color="#aaa"><FileOutput size={14} /></ToolIcon>
      <ToolIcon><PdfPen /></ToolIcon>
      <Push>自定义</Push>
      <ToolIcon><Tri /></ToolIcon>
      <AcroSep $wide />
      <Pressed aria-label="全屏"><Maximize2 size={12} /></Pressed>
      <AcroSpacer />
    </AcroBar>
    <AcroBar $low>
      <RoundTool aria-label="上一页"><svg width="10" height="10" viewBox="0 0 10 10" fill="#444"><path d="m5 0 5 5H7v5H3V5H0z" /></svg></RoundTool>
      <RoundTool aria-label="下一页"><svg width="10" height="10" viewBox="0 0 10 10" fill="#444"><path d="M5 10 0 5h3V0h4v5h3z" /></svg></RoundTool>
      <PageInput aria-label="页码" defaultValue="5" />
      <span>/ 6</span>
      <AcroSep />
      <Pressed aria-label="选择"><svg width="14" height="14" viewBox="0 0 14 14"><path d="M1 1h4M3 1v10M1 11h4" stroke="#555" fill="none" /><path d="m6 1 7 7H9l2 5-2 1-2-5-1 1z" fill="#333" /></svg></Pressed>
      <ToolIcon $wide><Hand size={15} /></ToolIcon>
      <AcroSep />
      <RoundTool aria-label="缩小"><svg width="10" height="10" viewBox="0 0 10 10"><path d="M0 4h10v3H0z" fill="#444" /></svg></RoundTool>
      <RoundTool aria-label="放大"><svg width="10" height="10" viewBox="0 0 10 10"><path d="M0 4h4V0h3v4h3v3H7v3H4V7H0z" fill="#444" /></svg></RoundTool>
      <ZoomBox>
        <ZoomSelect aria-label="缩放" defaultValue="125%"><option>125%</option></ZoomSelect>
        <Tri />
      </ZoomBox>
      <AcroSep />
      <ToolIcon><svg width="13" height="13" viewBox="0 0 13 13" fill="none" stroke="#444"><path d="M1 0v4h11V0M1 13V8h11v5M0 6h13" /></svg></ToolIcon>
      <ToolIcon><svg width="13" height="13" viewBox="0 0 13 13" fill="none" stroke="#446"><path d="M1 1h11v11H1zM3 3l2 2M10 3 8 5M3 10l2-2M10 10 8 8" strokeDasharray="2 1" /></svg></ToolIcon>
      <Push />
      <PanelLink $first>工具</PanelLink>
      <PanelLink>签名</PanelLink>
      <PanelLink>注释</PanelLink>
    </AcroBar>
    <Viewer>
      <Rail>
        <Padlock size={16} color="#c8a458" />
        <Files size={16} />
        <Bookmark size={16} fill="#8fa9c0" stroke="#8fa9c0" />
        <Paperclip size={16} />
        <PenLine size={16} />
      </Rail>
      <Gap />
      <Page>
        <Watermark aria-hidden="true">尚硅谷</Watermark>
        <PageBody>
          <PageHeading><span>3.</span><span>不要在服务器访问高峰运行高负载命令</span></PageHeading>
          {paragraphs.map((lines) => (
            <Para key={lines[0]}>
              {lines.map((l, i) => <Line key={l} $end={i === lines.length - 1}>{l}</Line>)}
            </Para>
          ))}
          <PageFoot>更多云计算-Java –大数据&nbsp; –前端&nbsp; –python 人工智能资料下载，可百度访问：尚硅谷官网</PageFoot>
        </PageBody>
      </Page>
      <Gap />
      <ScrollCol>
        <Tri $up />
        <ScrollThumb />
        <Tri />
      </ScrollCol>
    </Viewer>
    <Win7Bar>
      <Orb aria-label="开始"><Flag7 /></Orb>
      <Tile aria-label="资源管理器"><Explorer /></Tile>
      <Tile aria-label="Chrome"><Chrome size={21} /></Tile>
      <Tile aria-label="VMware"><VmIcon /></Tile>
      <Tile aria-label="Xshell"><Snail size={20} /></Tile>
      <Tile aria-label="Acrobat"><AcroIcon /></Tile>
      <Win7Tray>
        <KeysIcon size={12} color="#c9d4d6" />
        <Tri $up $color="#eee" />
        <Plug />
        <Bars />
        <Volume2 size={12} fill="#fff" />
        <Win7Clock>11:07<br />2018/12/11 星期二</Win7Clock>
        <ShowDesktop aria-label="显示桌面" />
      </Win7Tray>
    </Win7Bar>
    <Annotations />
  </Frame>
);

const BrowserWindow = () => (
  <Browser>
    <TabStrip />
    <NavBar>
      <NavButton aria-label="后退"><MdArrowBack size={20} /></NavButton>
      <NavButton $dim aria-label="前进"><MdArrowForward size={20} /></NavButton>
      <NavButton aria-label="刷新"><MdRefresh size={21} /></NavButton>
      <NavButton aria-label="主页"><MdOutlineHome size={21} /></NavButton>
      <UrlPill>
        <MdLock size={13} />
        <UrlInput aria-label="地址" defaultValue="bilibili.com/video/BV1ut411a7ro?p=19&vd_source=7cc5926555aee4..." />
        <NavButton aria-label="分享"><ShareArrow /></NavButton>
        <NavButton aria-label="收藏"><MdStarBorder size={18} /></NavButton>
      </UrlPill>
      <NavButton aria-label="扩展一"><CheekyFace /></NavButton>
      <NavButton aria-label="扩展二"><SpiralFace /></NavButton>
      <NavButton aria-label="扩展程序"><MdExtension size={17} /></NavButton>
      <NavButton aria-label="媒体"><MdQueueMusic size={21} /></NavButton>
      <NavButton aria-label="侧边栏"><SidePanel /></NavButton>
      <NavButton aria-label="账号"><Avatar>yt</Avatar></NavButton>
      <NavButton aria-label="菜单"><MdMoreVert size={19} /></NavButton>
    </NavBar>
    <BookmarkBar>
      {bookmarks.map((b) => <BookmarkItem key={b}><Folder />{b}</BookmarkItem>)}
      <More aria-label="更多书签">»</More>
    </BookmarkBar>
    <Video>
      <AcrobatFrame />
      <Progress />
    </Video>
  </Browser>
);

const TyporaWindow = () => (
  <Typora>
    <TyMenu>
      {["文件(F)", "编辑(E)", "段落(P)", "格式(O)", "视图(V)", "主题(T)", "帮助(H)"].map((m) => <span key={m}>{m}</span>)}
    </TyMenu>
    <TyBody>
      <Side>
        <SideMain>
          <SideTabs>
            <SideTab>文件</SideTab>
            <SideTab $on>大纲</SideTab>
          </SideTabs>
          <Outline $root>
            {outline.map(([title, subs]) => (
              <li key={title}>
                <OutlineLink $top href="#">{title}</OutlineLink>
                <Outline>
                  {subs.map((s) => (
                    <li key={s}>
                      <OutlineLink href="#">{s}</OutlineLink>
                      {s.startsWith("5.3") && (
                        <Outline><li><OutlineLink $on href="#">5.3.1 远程服务器注意事项</OutlineLink></li></Outline>
                      )}
                    </li>
                  ))}
                </Outline>
              </li>
            ))}
          </Outline>
        </SideMain>
        <SideScroll />
      </Side>
      <Editor>
        <Doc>
          <DocTable>
            <tbody>
              <tr><Td $key>/var/spool/mail</Td><Td>新收到邮件队列保存位置</Td></tr>
              <tr><Td $key>/var/spool/cron</Td><Td>定时任务队列保存位置</Td></tr>
            </tbody>
          </DocTable>
          <H3><HeadNo>5.3</HeadNo> 关于服务器</H3>
          <H4><HeadNo $small>5.3.1</HeadNo> 远程服务器注意事项</H4>
          <Notes>
            <Note>远程服务器,不能关机,只能重启.你就想想看,是不是得按开机键</Note>
            <Note>远程服务器在重启前,要中止正在执行的服务,强制断电时硬盘没有进行数据交互</Note>
            <Note>重启命令建议使用 "shutdown -r now" ,这条命令再重启时会正常保存和中止服务器中正常运行的程序,是安全重启命令,而且最好在重启之前执行几次 "sync"数据同步命令,可以让暂时保存在内存的数据持久化在磁盘上</Note>
            <Note>不要再服务器访问高峰运行高负载命令,参考备份.<Caret /></Note>
          </Notes>
          <DocThumb />
        </Doc>
        <TyFoot>
          <ChevronLeft size={15} />
          <CodeXml size={15} />
          <Push>2853 词</Push>
        </TyFoot>
      </Editor>
    </TyBody>
  </Typora>
);

const light = "#d0d0d0";
const XshellWindow = () => (
  <Xshell>
    <XTitle>
      <Snail size={16} />
      <span>cloudLinux01 - root@localhost:/ - Xshell 7 (Free for Home/School)</span>
      <XWin>
        <svg width="10" height="10" viewBox="0 0 10 10" stroke="#666"><path d="M0 5.500h10" /></svg>
        <svg width="10" height="10" viewBox="0 0 10 10" stroke="#666" fill="none"><rect x=".5" y=".5" width="9" height="9" rx="1" /></svg>
        <svg width="10" height="10" viewBox="0 0 10 10" stroke="#666"><path d="m0 0 10 10M10 0 0 10" /></svg>
      </XWin>
    </XTitle>
    <XHead>
      <XMenu>
        {["文件(F)", "编辑(E)", "查看(V)", "工具(T)", "选项卡(B)", "窗口(W)", "帮助(H)"].map((m) => <span key={m}>{m}</span>)}
      </XMenu>
      <XTools>
        <XTool><NewWin /></XTool>
        <XTool><OpenFolder size={16} /></XTool>
        <XCaret><Tri $color={light} /></XCaret>
        <XSep />
        <XTool><ChainIcon /></XTool>
        <XTool><ChainIcon dim /></XTool>
        <XSep />
        <XTool><NewWin gear /></XTool>
        <XCaret><Tri $color={light} /></XCaret>
        <XSep />
        <XTool $color="#c9c9c9"><Search size={16} fill="#9a9a9a" /></XTool>
        <XSep />
        <XTool><LayoutIcon /></XTool>
        <XCaret><Tri $color={light} /></XCaret>
        <XTool><EarthIcon /></XTool>
        <XCaret><Tri $color={light} /></XCaret>
        <XTool><FontIcon /></XTool>
        <XCaret><Tri $color={light} /></XCaret>
        <XSep />
        <XTool><Snail size={16} /></XTool>
        <XTool><GreenFolder /></XTool>
        <XSep />
        <XTool><ExpandIcon /></XTool>
        <XTool><GreyPadlock /></XTool>
        <XSep />
        <XTool><KeysIcon /></XTool>
        <XTool><PenIcon /></XTool>
        <XSep />
        <XTool><PlusFolder /></XTool>
        <XCaret><Tri $color={light} /></XCaret>
        <XTool><svg width="14" height="13" viewBox="0 0 14 13" fill="#5d5f5e"><path d="M0 0h5v13H0zM7 3h7v4H7zM7 9h7v4H7z" /></svg></XTool>
        <XCaret><Tri $color="#888" /></XCaret>
        <XSep />
        <XTool><svg width="16" height="16" viewBox="0 0 16 16"><circle cx="8" cy="8" r="8" fill="#4f8fd8" /><path d="M5.500 6.500c0-4 5.500-3 5 0-.3 1.500-2.500 1.500-2.500 3.500M8 11v2" stroke="#fff" strokeWidth="2" fill="none" /></svg></XTool>
        <XTool><ChatIcon /></XTool>
        <Push><Tri $color="#000" /></Push>
      </XTools>
      <Address>
        <Padlock />
        <AddressInput aria-label="会话地址" defaultValue="ssh://root:********@192.168.199.199:22" />
        <Tri $color="#b5b5b5" />
      </Address>
      <Hint><FlagIcon />要添加当前会话，点击左侧的箭头按钮。</Hint>
    </XHead>
    <XTabs>
      <XTab><Dot /><span><u>1</u> cloudLinux01</span><Push>×</Push></XTab>
      <AddTab aria-label="新建标签">+</AddTab>
      <TabNav>
        <svg width="21" height="10" viewBox="0 0 21 10" fill="#999"><path d="M6 0v10L0 5zM15 0v10l6-5z" /></svg>
        <Tri $color="#ccc" />
      </TabNav>
    </XTabs>
    <Console>
      <Term>
        {listing.map(([perm, links, size, month, day, time, name, target]) => (
          <TermRow key={name}>
            <span>{perm}</span><Num>{links}</Num><span>root</span><span>root</span><Num>{size}</Num>
            <span>{month}</span><span>{day}</span>
            <Tail>
              <span>{time}</span>
              <Name $kind={name === "tmp" ? "tmp" : target ? "link" : "dir"}>{name}</Name>
              {target && <><span>-&gt;</span><Name>{target}</Name></>}
            </Tail>
          </TermRow>
        ))}
        <div>[root@localhost /]# <Block /></div>
      </Term>
      <TermScroll><TermThumb /></TermScroll>
    </Console>
    <Status>
      <span>ssh://root@192.168.199.199:22</span>
      <Push />
      <StatusItem $w={69}><Padlock size={10} />SSH2</StatusItem>
      <StatusItem $w={54}>xterm</StatusItem>
      <StatusItem $w={67}><SizeIcon />116x19</StatusItem>
      <StatusItem $w={67}><PosIcon />19,21</StatusItem>
      <StatusItem $w={66}>1 会话<Push /><Tri $up $color="#fff" /><Push /></StatusItem>
      <StatusItem $w={47}><TwoArrows /></StatusItem>
      <StatusItem $w={31} $dim>CAP</StatusItem>
      <StatusItem $w={35}>NUM</StatusItem>
      <Grip />
    </Status>
  </Xshell>
);

const HostTaskbar = () => (
  <Taskbar>
    <Dock>
      <DockItem aria-label="开始"><WinLogo /></DockItem>
      <DockItem aria-label="搜索"><Search size={23} /></DockItem>
      <DockItem $run aria-label="Chrome"><Chrome /></DockItem>
      <DockItem $run aria-label="微信"><WeChat /></DockItem>
      <DockItem $run $active aria-label="Typora"><TyIcon>T</TyIcon></DockItem>
      <DockItem $run aria-label="Xshell"><Snail size={24} /></DockItem>
      <DockItem $run aria-label="Steam"><SteamDisc $s={23}><FaSteamSymbol size={21} /></SteamDisc></DockItem>
    </Dock>
    <Tray>
      <TrayItem aria-label="更多"><ChevronUp size={17} /></TrayItem>
      <TrayItem aria-label="微信"><WeChat size={16} /></TrayItem>
      <TrayItem aria-label="Steam"><SteamDisc $s={16}><FaSteamSymbol size={14} /></SteamDisc></TrayItem>
      <TrayItem aria-label="应用"><PurpleApp /></TrayItem>
      <TrayItem aria-label="Logitech"><GIcon /></TrayItem>
      <TrayItem aria-label="Docker"><FaDocker size={17} /></TrayItem>
      <TrayItem>中</TrayItem>
      <TrayItem $tight aria-label="网络"><NetIcon /></TrayItem>
      <TrayItem $tight aria-label="音量"><Volume2 size={17} strokeWidth={1.5} /></TrayItem>
      <Clock>21:33<br />2023/8/19</Clock>
      <Badge>1</Badge>
    </Tray>
  </Taskbar>
);

export default function App() {
  return (
    <Desktop>
      <Global />
      <Windows>
        <BrowserWindow />
        <RightCol>
          <TyporaWindow />
          <XshellWindow />
        </RightCol>
      </Windows>
      <HostTaskbar />
    </Desktop>
  );
}
